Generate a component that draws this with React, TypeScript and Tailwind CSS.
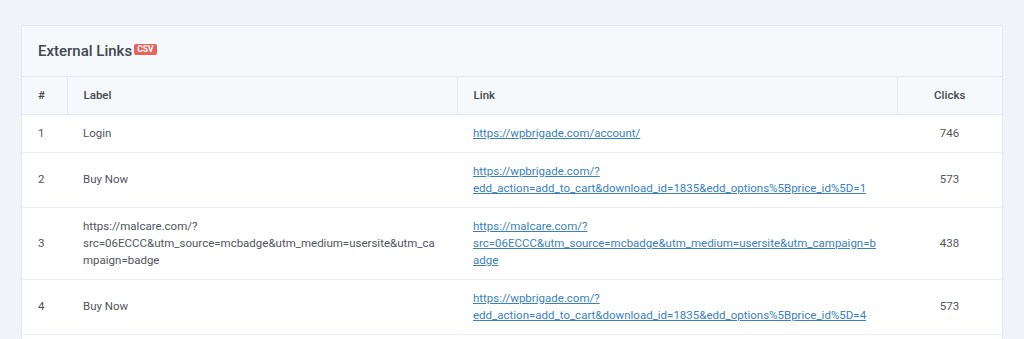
import React from "react";

const rows = [
  {
    id: 1,
    label: "Login",
    link: "https://wpbrigade.com/account/",
    clicks: 746,
  },
  {
    id: 2,
    label: "Buy Now",
    link: "https://wpbrigade.com/?edd_action=add_to_cart&download_id=1835&edd_options%5Bprice_id%5D=1",
    clicks: 573,
  },
  {
    id: 3,
    label:
      "https://malcare.com/?src=06ECCC&utm_source=mcbadge&utm_medium=usersite&utm_campaign=badge",
    link: "https://malcare.com/?src=06ECCC&utm_source=mcbadge&utm_medium=usersite&utm_campaign=badge",
    clicks: 438,
  },
  {
    id: 4,
    label: "Buy Now",
    link: "https://wpbrigade.com/?edd_action=add_to_cart&download_id=1835&edd_options%5Bprice_id%5D=4",
    clicks: 573,
  },
];

const App = () => {
  return (
    <div className="w-[1024px] h-[339px] overflow-hidden bg-[#f0f4f8] px-[21px] pt-[25px] font-['Roboto',sans-serif]">
      <div className="border border-[#e2e8ef] bg-white">
        <div className="h-[51px] flex items-center px-4 bg-[#f6f9fc] border-b border-[#e2e8ef]">
          <h2 className="text-[15px] font-medium text-[#43474d] leading-none flex items-start">
            External Links
            <span className="ml-[2px] mt-0 bg-[#e8625c] text-white text-[8.5px] font-bold leading-[11px] px-[3px] rounded-[2px]">
              CSV
            </span>
          </h2>
        </div>
        <table className="w-full table-fixed border-collapse text-[11.5px] leading-[17px] text-[#50555b]">
          <colgroup>
            <col className="w-[45px]" />
            <col className="w-[390px]" />
            <col className="w-[440px]" />
            <col className="w-[105px]" />
          </colgroup>
          <thead>
            <tr className="h-[37px] bg-[#f5f9fc] border-b border-[#e2e8ef]">
              <th className="px-4 text-left font-medium text-[#43474d] border-r border-[#e2e8ef]">
                #
              </th>
              <th className="px-4 text-left font-medium text-[#43474d] border-r border-[#e2e8ef]">
                Label
              </th>
              <th className="px-4 text-left font-medium text-[#43474d] border-r border-[#e2e8ef]">
                Link
              </th>
              <th className="px-4 text-center font-medium text-[#43474d]">
                Clicks
              </th>
            </tr>
          </thead>
          <tbody>
            {rows.map((row) => (
              <tr key={row.id} className="border-b border-[#e9edf1]">
                <td className="px-4 py-[10px] align-middle">{row.id}</td>
                <td className="px-4 py-[10px] align-middle break-words">
                  {row.label}
                </td>
                <td className="px-4 py-[10px] align-middle break-words">
                  <a href="#" className="text-[#3a7fc0] underline">
                    {row.link}
                  </a>
                </td>
                <td className="px-4 py-[10px] align-middle text-center">
                  {row.clicks}
                </td>
              </tr>
            ))}
            <tr>
              <td colSpan={4} className="h-[40px]"></td>
            </tr>
          </tbody>
        </table>
      </div>
    </div>
  );
};

export default App;
